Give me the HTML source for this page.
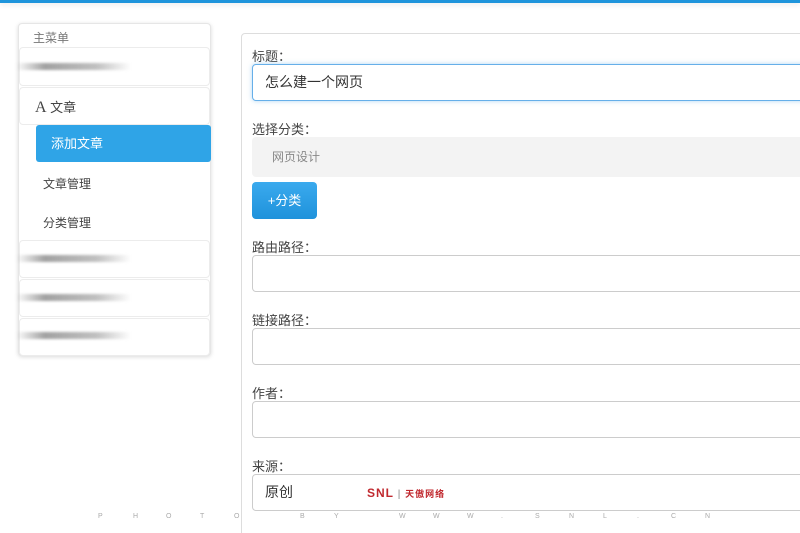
<!DOCTYPE html>
<html><head><meta charset="utf-8">
<style>
*{box-sizing:border-box;margin:0;padding:0}
html,body{width:800px;height:533px;overflow:hidden}
body{background:#fff;font-family:"Liberation Sans","Noto Sans CJK SC",sans-serif;color:#333;position:relative}
.top{position:absolute;left:0;top:0;width:800px;height:3px;background:#1f95dc;box-shadow:0 1px 6px rgba(0,0,0,.12)}
.side{position:absolute;left:18px;top:23px;width:193px;height:333px;border:1px solid #e6e6e6;border-radius:4px;box-shadow:0 1px 4px rgba(0,0,0,.15);background:#fff}
.abs{position:absolute}
.box{position:absolute;left:0;width:191px;border:1px solid #ececec;border-radius:4px;background:#fff}
.smear{position:absolute;left:-4px;height:7px;width:115px;background:linear-gradient(90deg,rgba(150,150,150,0),rgba(130,130,130,.75) 25%,rgba(150,150,150,.6) 70%,rgba(200,200,200,0));filter:blur(1.2px)}
.main{position:absolute;left:241px;top:33px;width:600px;height:520px;border:1px solid #ddd;border-radius:4px;background:#fff}
.lbl{position:absolute;left:252px;font-size:13px;color:#444}
.inp{position:absolute;left:252px;width:600px;height:37px;border:1px solid #ccc;border-radius:4px;background:#fff;font-size:14px;padding-left:12px;line-height:35px;color:#333}
.wm{position:absolute;top:513px;font-size:7px;color:#aaa}
</style></head><body>
<div class="top"></div>
<div class="side">
  <div class="abs" style="left:14px;top:5px;font-size:12px;color:#777">主菜单</div>
  <div class="box" style="top:23px;height:39px"><div class="smear" style="top:15px"></div></div>
  <div class="box" style="top:63px;height:38px"><div class="abs" style="left:15px;top:9px;font-size:13px;color:#444"><span style="font-family:'Liberation Serif',serif;font-size:16px">A</span> 文章</div></div>
  <div class="abs" style="left:17px;top:101px;width:175px;height:37px;background:#2fa4e7;border-radius:3px;color:#fff;font-size:13px;line-height:37px;padding-left:15px">添加文章</div>
  <div class="abs" style="left:24px;top:151px;font-size:12px;color:#444">文章管理</div>
  <div class="abs" style="left:24px;top:190px;font-size:12px;color:#444">分类管理</div>
  <div class="box" style="top:216px;height:38px"><div class="smear" style="top:14px"></div></div>
  <div class="box" style="top:255px;height:38px"><div class="smear" style="top:14px"></div></div>
  <div class="box" style="top:294px;height:38px"><div class="smear" style="top:13px"></div></div>
</div>
<div class="main"></div>
<div class="lbl" style="top:46px">标题：</div>
<div class="inp" style="top:64px;border-color:#66afe9;box-shadow:0 0 5px rgba(102,175,233,.5)">怎么建一个网页</div>
<div class="lbl" style="top:119px">选择分类：</div>
<div class="inp" style="top:137px;height:40px;border:none;background:#f3f3f3;color:#888;font-size:12px;padding-left:20px;line-height:40px">网页设计</div>
<div class="abs" style="left:252px;top:182px;width:65px;height:37px;border-radius:4px;background:linear-gradient(#3aaaee,#1f92db);color:#fff;font-size:13px;line-height:37px;text-align:center">+分类</div>
<div class="lbl" style="top:237px">路由路径：</div>
<div class="inp" style="top:255px"></div>
<div class="lbl" style="top:310px">链接路径：</div>
<div class="inp" style="top:328px"></div>
<div class="lbl" style="top:383px">作者：</div>
<div class="inp" style="top:401px"></div>
<div class="lbl" style="top:456px">来源：</div>
<div class="inp" style="top:474px">原创</div>
<div class="abs" style="left:367px;top:486px;font-size:12px;font-weight:bold;color:#c0282e;letter-spacing:1px">SNL<span style="color:#888;font-weight:normal;font-size:10px"> | </span><span style="font-size:9px">天傲网络</span></div>
<div class="wm" style="left:98px">P</div><div class="wm" style="left:133px">H</div><div class="wm" style="left:166px">O</div><div class="wm" style="left:200px">T</div><div class="wm" style="left:234px">O</div>
<div class="wm" style="left:300px">B</div><div class="wm" style="left:334px">Y</div><div class="wm" style="left:399px">W</div><div class="wm" style="left:433px">W</div><div class="wm" style="left:467px">W</div><div class="wm" style="left:501px">.</div><div class="wm" style="left:535px">S</div><div class="wm" style="left:569px">N</div><div class="wm" style="left:603px">L</div><div class="wm" style="left:637px">.</div><div class="wm" style="left:671px">C</div><div class="wm" style="left:705px">N</div>
</body></html>
